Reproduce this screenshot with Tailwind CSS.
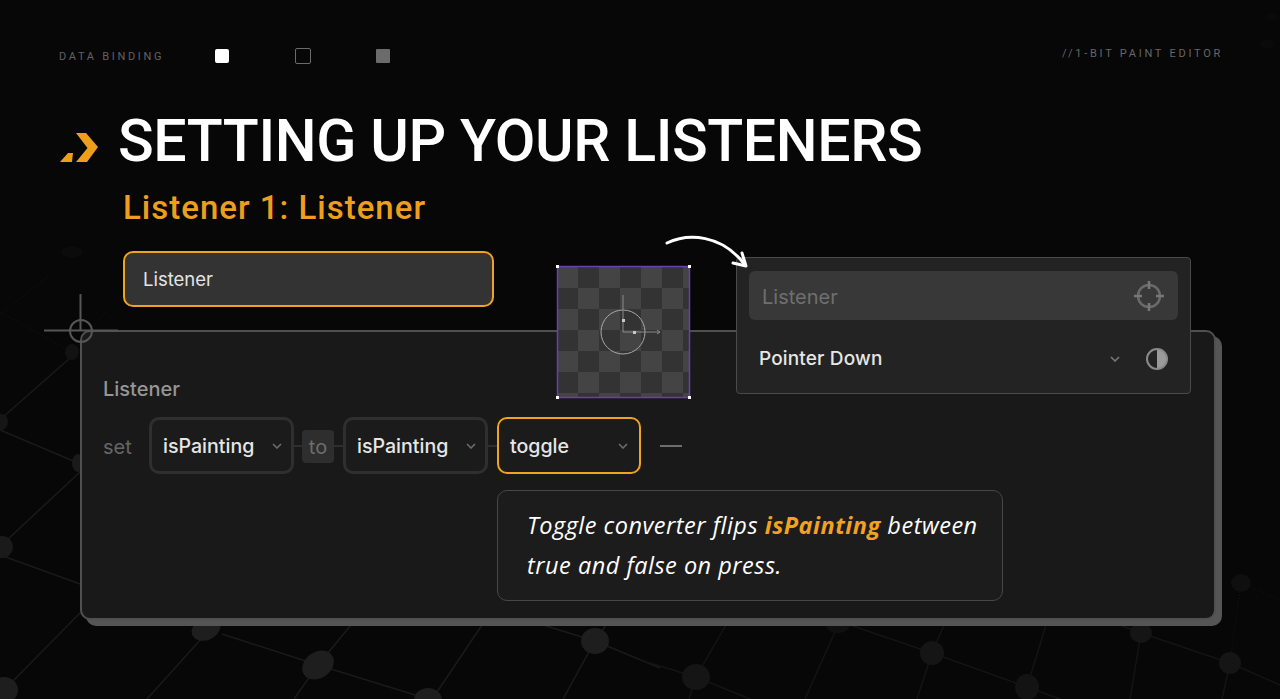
<!DOCTYPE html>
<html lang="en">
<head>
    <meta charset="UTF-8">
    <meta name="viewport" content="width=device-width, initial-scale=1.0">
    <title>Setting up your listeners</title>
    <script src="https://cdn.jsdelivr.net/npm/@tailwindcss/browser@4"></script>
</head>
<body class="bg-[#070707]">
<div class="relative w-[1280px] h-[699px] overflow-hidden bg-[#070707] font-['Inter',sans-serif]">

    <!-- node graph behind everything -->
    <svg class="absolute inset-0" width="1280" height="699" fill="none">
        <g stroke="#1a1a1a" stroke-width="1.5">
            <path d="M3 417 70 358M0 430 78 463M7 540 80 472M0 555 80 584M81 612 12 682"/>
            <path d="M202 638 147 699M222 634 318 665 428 699M351 625 318 665 294 699M482 625 437 692"/>
            <path d="M543 625 595 641 660 668M606 625 595 641 563 699"/>
        </g>
        <g stroke="#141414" stroke-width="1.5">
            <path d="M726 625 696 677 689 699M640 660 696 677 750 699M838 625 805 699"/>
            <path d="M850 625 932 653 1027 687 1060 699M944 625 932 653 917 699M1046 625 1027 687"/>
            <path d="M1120 625 1141 633 1230 663 1280 685M1141 633 1130 699M1230 663 1222 699"/>
        </g>
        <path d="M1241 583 1230 663M1241 583 1280 600M0 312 72 352M0 315 50 275M72 352 107 310" stroke="#151515" stroke-dasharray="1 2"/>
        <g fill="#1e1e1e">
            <ellipse cx="206" cy="629" rx="15" ry="11" transform="rotate(-25 206 629)"/>
            <ellipse cx="318" cy="665" rx="17" ry="13" transform="rotate(-35 318 665)"/>
            <ellipse cx="595" cy="641" rx="14" ry="13"/>
            <ellipse cx="428" cy="700" rx="14" ry="12"/>
            <ellipse cx="4" cy="690" rx="14" ry="13"/>
            <ellipse cx="2" cy="547" rx="11" ry="11" fill="#1a1a1a"/>
            <ellipse cx="1" cy="422" rx="7" ry="8" fill="#161616"/>
            <ellipse cx="78" cy="463" rx="6" ry="9" fill="#1a1a1a"/>
        </g>
        <g fill="#151515">
            <ellipse cx="696" cy="677" rx="14" ry="13"/>
            <ellipse cx="838" cy="625" rx="12" ry="8" fill="#101010"/>
            <ellipse cx="932" cy="653" rx="12" ry="12"/>
            <ellipse cx="1027" cy="687" rx="12" ry="13" fill="#131313"/>
            <ellipse cx="1141" cy="633" rx="11" ry="10"/>
            <ellipse cx="1230" cy="663" rx="11" ry="11"/>
            <ellipse cx="1241" cy="583" rx="10" ry="9" fill="#0f0f0f"/>
            <ellipse cx="72" cy="352" rx="7" ry="8" fill="#121212"/>
            <ellipse cx="72" cy="252" rx="11" ry="6" fill="#0b0b0b"/>
            <ellipse cx="1272" cy="17" rx="6" ry="4" fill="#0a0a0a"/>
            <ellipse cx="1267" cy="44" rx="7" ry="5" fill="#0a0a0a"/>
        </g>
    </svg>

    <div class="relative">
        <!-- top strip -->
        <div class="flex justify-between pt-[49px] pl-[59px] pr-[57px] h-[63px]">
            <div class="flex items-center h-[14px]">
                <span class="w-[156px] text-[11px] tracking-[2.7px] text-[#626262] font-['Roboto',sans-serif] leading-[14px] mt-[1px]">DATA BINDING</span>
                <span class="w-[14px] h-[14px] bg-white rounded-[2px]"></span>
                <span class="w-[16px] h-[16px] ml-[66px] border border-[#6a6a6a] rounded-[2px]"></span>
                <span class="w-[14px] h-[14px] ml-[65px] bg-[#6b6b6b] rounded-[1px]"></span>
            </div>
            <span class="text-[11px] tracking-[2.75px] text-[#666] font-['Roboto',sans-serif] leading-[10px]">//1-BIT PAINT EDITOR</span>
        </div>

        <!-- heading -->
        <div class="flex items-center mt-[48px] pl-[60px] h-[60px]">
            <svg class="mt-[1px]" width="58" height="60" viewBox="0 0 58 60"><path d="M16 21H26L38 35 27 50H16L27.5 36Z M0 50 8 41H13L12 50Z" fill="#ed9f1c"/></svg>
            <h1 class="text-[59px] leading-[60px] font-medium text-white tracking-[-0.4px] font-['Roboto',sans-serif] whitespace-nowrap">SETTING UP YOUR LISTENERS</h1>
        </div>
        <h2 class="mt-[19px] ml-[123px] text-[33px] leading-[36px] text-[#ed9f1c] font-medium tracking-[1px] font-['Roboto',sans-serif]">Listener 1: Listener</h2>

        <div class="mt-[25px] ml-[123px] w-[371px] h-[56px] flex items-center px-[18px] bg-[#333] border-2 border-[#f0a31c] rounded-[10px] text-[18.5px] text-[#e4e4e4]"><span class="pt-[2px]">Listener</span></div>

        <!-- main card -->
        <div class="mt-[23px] ml-[80px] w-[1136px] h-[290px] pt-[45px] pl-[21px] bg-[#191919] border-2 border-[#505050] rounded-[10px] shadow-[6px_6px_0_#555]">
            <div class="text-[20px] leading-[24px] text-[#969696] font-medium">Listener</div>
            <div class="flex items-center h-[57px] mt-[16px]">
                <span class="w-[46px] pt-[2px] text-[20px] text-[#666]">set</span>
                <div class="w-[145px] h-[57px] flex items-center justify-between pl-[11px] pr-[9px] bg-[#1b1b1b] border-[3px] border-[#2f2f2f] rounded-[10px] text-[19.6px] font-medium text-[#e6e6e6]">
                    <span class="pt-[2px]">isPainting</span>
                    <svg width="10" height="6" viewBox="0 0 10 6" fill="none" stroke="#6b6b6b" stroke-width="1.6"><path d="M1 1l4 4 4-4"/></svg>
                </div>
                <span class="w-[8px] h-[2px] bg-[#2f2f2f]"></span>
                <span class="w-[32px] h-[33px] mt-[2px] flex items-center justify-center bg-[#2e2e2e] rounded-[4px] text-[20px] text-[#6d6d6d]">to</span>
                <span class="w-[9px] h-[2px] bg-[#2f2f2f]"></span>
                <div class="w-[145px] h-[57px] flex items-center justify-between pl-[11px] pr-[9px] bg-[#1b1b1b] border-[3px] border-[#2f2f2f] rounded-[10px] text-[19.6px] font-medium text-[#e6e6e6]">
                    <span class="pt-[2px]">isPainting</span>
                    <svg width="10" height="6" viewBox="0 0 10 6" fill="none" stroke="#6b6b6b" stroke-width="1.6"><path d="M1 1l4 4 4-4"/></svg>
                </div>
                <span class="w-[9px] h-[2px] bg-[#2f2f2f]"></span>
                <div class="w-[144px] h-[57px] flex items-center justify-between pl-[11px] pr-[11px] bg-[#1b1b1b] border-2 border-[#f0a31c] rounded-[10px] text-[19.6px] font-medium text-[#e6e6e6]">
                    <span class="pt-[2px]">toggle</span>
                    <svg width="10" height="6" viewBox="0 0 10 6" fill="none" stroke="#6b6b6b" stroke-width="1.6"><path d="M1 1l4 4 4-4"/></svg>
                </div>
                <span class="w-[22px] h-[2px] ml-[19px] bg-[#6e6e6e]"></span>
            </div>
            <div class="mt-[16px] ml-[394px] w-[506px] h-[111px] pt-[14px] pl-[29px] bg-[#1c1c1c] border border-[#474747] rounded-[10px] text-[23.5px] leading-[40px] tracking-[0.5px] italic text-white font-['Open_Sans',sans-serif] font-normal whitespace-nowrap">
                Toggle converter flips <b class="text-[#f0a31c] font-bold">isPainting</b> between<br>true and false on press.
            </div>
        </div>
    </div>

    <!-- corner marker on the card -->
    <svg class="absolute left-[44px] top-[294px]" width="74" height="74" fill="none" stroke="#565656">
        <path d="M0 36.5H74M36.5 0V37" stroke-width="2"/>
        <circle cx="37" cy="37" r="11" stroke-width="2"/>
    </svg>

    <!-- sprite preview -->
    <svg class="absolute left-[554px] top-[263px]" width="140" height="138" viewBox="0 0 140 138" fill="none">
        <defs>
            <pattern id="checks" x="3" y="4" width="42" height="42" patternUnits="userSpaceOnUse">
                <rect width="42" height="42" fill="#444"/>
                <rect x="21" width="21" height="21" fill="#333"/>
                <rect y="21" width="21" height="21" fill="#333"/>
            </pattern>
        </defs>
        <rect x="3.5" y="3.5" width="132" height="131" fill="url(#checks)" stroke="#6a3fb0" stroke-width="1.5"/>
        <circle cx="69" cy="69" r="22" stroke="#a8a8a8"/>
        <path d="M69 32V69H106M103 67l3 2-3 2" stroke="#8a8a8a"/>
        <rect x="68" y="56" width="3" height="3" fill="#c8c8c8"/>
        <rect x="79" y="68" width="3" height="3" fill="#c8c8c8"/>
        <g fill="#fff">
            <rect x="2" y="2" width="3" height="3"/><rect x="134" y="2" width="3" height="3"/>
            <rect x="2" y="133" width="3" height="3"/><rect x="134" y="133" width="3" height="3"/>
        </g>
    </svg>

    <!-- property panel -->
    <div class="absolute left-[736px] top-[257px] w-[455px] h-[137px] px-[12px] pt-[13px] bg-[#232323] border border-[#4a4a4a] rounded-[4px]">
        <div class="h-[49px] flex items-center justify-between pl-[13px] pr-[13px] bg-[#383838] rounded-[6px] text-[20px] text-[#6f6f6f]">
            <span class="pt-[2px]">Listener</span>
            <svg width="32" height="32" viewBox="0 0 32 32" fill="none" stroke="#6a6a6a" stroke-width="2.5">
                <circle cx="16" cy="16" r="11"/>
                <path d="M16 1v8M16 23v8M1 16h8M23 16h8" stroke-width="2.5" stroke="#777"/>
            </svg>
        </div>
        <div class="flex items-center justify-between mt-[22px] pl-[10px] pr-[9px] h-[34px]">
            <span class="text-[19px] font-medium tracking-[0.15px] text-[#e6e6e6]">Pointer Down</span>
            <div class="flex items-center">
                <svg width="10" height="6" viewBox="0 0 10 6" fill="none" stroke="#777" stroke-width="1.6"><path d="M1 1l4 4 4-4"/></svg>
                <svg class="ml-[25px]" width="24" height="24" viewBox="0 0 24 24" fill="none">
                    <path d="M12 2a10 10 0 0 1 0 20Z" fill="#9a9a9a"/>
                    <circle cx="12" cy="12" r="10" stroke="#8a8a8a" stroke-width="2"/>
                </svg>
            </div>
        </div>
    </div>

    <!-- curved arrow, sits over the panel edge -->
    <svg class="absolute left-[660px] top-[230px]" width="95" height="45" viewBox="0 0 95 45" fill="none" stroke="#fff" stroke-width="3" stroke-linecap="round" stroke-linejoin="round">
        <path d="M7 13C28 3 62 4 85 35"/>
        <path d="M73 33 86 36 82 23"/>
    </svg>
</div>
</body>
</html>
